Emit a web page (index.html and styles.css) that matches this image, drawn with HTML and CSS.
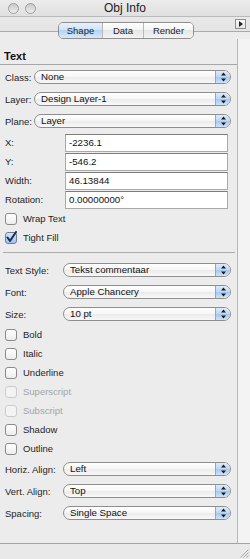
FILE: index.html
```html
<!DOCTYPE html>
<html lang="en">
    <head>
        <meta charset="UTF-8">
        <title>Obj Info</title>
        <link rel="stylesheet" href="styles.css">
    </head>
    <body>
        <div class="window">
            <div class="titlebar">
                <div class="lights">
                    <span class="light"></span>
                    <span class="light"></span>
                </div>
                <div class="title">Obj Info</div>
            </div>
            <div class="toolbar">
                <div class="segmented">
                    <div class="seg seg-shape active">Shape</div>
                    <div class="seg seg-data">Data</div>
                    <div class="seg seg-render">Render</div>
                </div>
                <div class="menu-btn">
                    <svg width="4" height="6" viewBox="0 0 4 6"><path d="M0 0 L4 3 L0 6 Z" fill="#222"/></svg>
                </div>
            </div>
            <div class="main">
                <div class="panel">
                    <div class="heading">Text</div>

                    <div class="group top-pops">
                        <div class="row pop-row">
                            <span class="lbl">Class:</span>
                            <div class="popup"><span class="val">None</span><span class="arrows"><svg width="7" height="10" viewBox="0 0 7 10"><path d="M3.5 0.5 L6 3.5 H1 Z M3.5 9.5 L6 6.5 H1 Z" fill="#1a1a1a"/></svg></span></div>
                        </div>
                        <div class="row pop-row">
                            <span class="lbl">Layer:</span>
                            <div class="popup"><span class="val">Design Layer-1</span><span class="arrows"><svg width="7" height="10" viewBox="0 0 7 10"><path d="M3.5 0.5 L6 3.5 H1 Z M3.5 9.5 L6 6.5 H1 Z" fill="#1a1a1a"/></svg></span></div>
                        </div>
                        <div class="row pop-row">
                            <span class="lbl">Plane:</span>
                            <div class="popup"><span class="val">Layer</span><span class="arrows"><svg width="7" height="10" viewBox="0 0 7 10"><path d="M3.5 0.5 L6 3.5 H1 Z M3.5 9.5 L6 6.5 H1 Z" fill="#1a1a1a"/></svg></span></div>
                        </div>
                    </div>

                    <div class="group fields">
                        <div class="row field-row"><span class="lbl">X:</span><div class="field">-2236.1</div></div>
                        <div class="row field-row"><span class="lbl">Y:</span><div class="field">-546.2</div></div>
                        <div class="row field-row"><span class="lbl">Width:</span><div class="field">46.13844</div></div>
                        <div class="row field-row"><span class="lbl">Rotation:</span><div class="field">0.00000000°</div></div>
                    </div>

                    <div class="group checks">
                        <div class="row check-row"><span class="box"></span>Wrap Text</div>
                        <div class="row check-row"><span class="box checked"><svg width="13" height="13" viewBox="0 0 13 13"><path d="M2.5 6.5 L5 10 L11 1" fill="none" stroke="#1c2c52" stroke-width="2" stroke-linecap="round" stroke-linejoin="round"/></svg></span>Tight Fill</div>
                    </div>

                    <div class="separator"></div>

                    <div class="group style-pops">
                        <div class="row pop-row">
                            <span class="lbl">Text Style:</span>
                            <div class="popup"><span class="val">Tekst commentaar</span><span class="arrows"><svg width="7" height="10" viewBox="0 0 7 10"><path d="M3.5 0.5 L6 3.5 H1 Z M3.5 9.5 L6 6.5 H1 Z" fill="#1a1a1a"/></svg></span></div>
                        </div>
                        <div class="row pop-row">
                            <span class="lbl">Font:</span>
                            <div class="popup"><span class="val">Apple Chancery</span><span class="arrows"><svg width="7" height="10" viewBox="0 0 7 10"><path d="M3.5 0.5 L6 3.5 H1 Z M3.5 9.5 L6 6.5 H1 Z" fill="#1a1a1a"/></svg></span></div>
                        </div>
                        <div class="row pop-row">
                            <span class="lbl">Size:</span>
                            <div class="popup"><span class="val">10 pt</span><span class="arrows"><svg width="7" height="10" viewBox="0 0 7 10"><path d="M3.5 0.5 L6 3.5 H1 Z M3.5 9.5 L6 6.5 H1 Z" fill="#1a1a1a"/></svg></span></div>
                        </div>
                    </div>

                    <div class="group checks">
                        <div class="row check-row"><span class="box"></span>Bold</div>
                        <div class="row check-row"><span class="box"></span>Italic</div>
                        <div class="row check-row"><span class="box"></span>Underline</div>
                        <div class="row check-row disabled"><span class="box"></span>Superscript</div>
                        <div class="row check-row disabled"><span class="box"></span>Subscript</div>
                        <div class="row check-row"><span class="box"></span>Shadow</div>
                        <div class="row check-row"><span class="box"></span>Outline</div>
                    </div>

                    <div class="group style-pops">
                        <div class="row pop-row">
                            <span class="lbl">Horiz. Align:</span>
                            <div class="popup"><span class="val">Left</span><span class="arrows"><svg width="7" height="10" viewBox="0 0 7 10"><path d="M3.5 0.5 L6 3.5 H1 Z M3.5 9.5 L6 6.5 H1 Z" fill="#1a1a1a"/></svg></span></div>
                        </div>
                        <div class="row pop-row">
                            <span class="lbl">Vert. Align:</span>
                            <div class="popup"><span class="val">Top</span><span class="arrows"><svg width="7" height="10" viewBox="0 0 7 10"><path d="M3.5 0.5 L6 3.5 H1 Z M3.5 9.5 L6 6.5 H1 Z" fill="#1a1a1a"/></svg></span></div>
                        </div>
                        <div class="row pop-row">
                            <span class="lbl">Spacing:</span>
                            <div class="popup"><span class="val">Single Space</span><span class="arrows"><svg width="7" height="10" viewBox="0 0 7 10"><path d="M3.5 0.5 L6 3.5 H1 Z M3.5 9.5 L6 6.5 H1 Z" fill="#1a1a1a"/></svg></span></div>
                        </div>
                    </div>
                </div>
                <div class="strip"></div>
            </div>
            <div class="footer">
                <svg width="10" height="10" viewBox="0 0 10 10">
                    <path d="M9.5 1.5 L1.5 9.5 M9.5 4.5 L4.5 9.5 M9.5 7.5 L7.5 9.5" stroke="#a8a8a8" stroke-width="1"/>
                </svg>
            </div>
        </div>
    </body>
</html>
```

FILE: styles.css
```css
*{
    margin: 0;
    padding: 0;
    box-sizing: border-box;
}
body{
    width: 250px;
    height: 559px;
    overflow: hidden;
    font-family: "Liberation Sans", Arial, sans-serif;
    font-size: 9.5px;
    color: #1e1e1e;
    background: #ececec;
}
.window{
    height: 559px;
    display: flex;
    flex-direction: column;
}

/* title bar */
.titlebar{
    height: 17px;
    display: grid;
    grid-template-columns: 1fr auto 1fr;
    align-items: center;
    background: linear-gradient(#ececec, #e0e0e0);
    border-bottom: 1px solid #b9b9b9;
}
.lights{
    display: flex;
    gap: 6px;
    padding-left: 8px;
}
.light{
    width: 11px;
    height: 11px;
    border-radius: 50%;
    border: 1px solid #9c9c9c;
    background: linear-gradient(#c9c9c9, #eeeeee);
}
.title{
    font-size: 12px;
    color: #222;
    line-height: 16px;
}

/* toolbar with tabs */
.toolbar{
    height: 22px;
    display: flex;
    align-items: flex-start;
    background: linear-gradient(to bottom, #e9e9e9 0, #e4e4e4 14px, #a9a9a9 14px, #a9a9a9 15px, #ececec 15px);
}
.segmented{
    display: flex;
    margin: 5px 0 0 58px;
    height: 17px;
    border: 1px solid #8f8f8f;
    border-radius: 5px;
    overflow: hidden;
}
.seg{
    line-height: 15px;
    text-align: center;
    background: linear-gradient(#ffffff, #f3f3f3 50%, #e6e6e6 50%, #f4f4f4);
    border-left: 1px solid #b8b8b8;
}
.seg:first-child{
    border-left: none;
}
.seg-shape{ width: 43px; }
.seg-data{ width: 41px; }
.seg-render{ width: 50px; }
.seg.active{
    background: linear-gradient(#e6f1fd, #cde2f9 50%, #b4d4f5 50%, #d6e9fb);
}
.menu-btn{
    margin: 2px 4px 0 auto;
    width: 11px;
    height: 10px;
    border: 1px solid #8c8c8c;
    background: linear-gradient(#fafafa, #e4e4e4);
    display: flex;
    align-items: center;
    justify-content: center;
}

/* main area */
.main{
    flex: 1;
    display: flex;
}
.panel{
    width: 238px;
    border-right: 1px solid #b6b6b6;
    background: #ececec;
}
.strip{
    flex: 1;
    background: #f3f3f3;
}
.heading{
    font-size: 11px;
    font-weight: bold;
    color: #111;
    line-height: 13px;
    padding: 11px 0 1px 4px;
    border-bottom: 1px solid #a6a6a6;
}
.row{
    display: flex;
    align-items: center;
}
.lbl{
    padding-left: 5px;
    flex-shrink: 0;
}

/* popups */
.top-pops{
    padding-top: 1px;
}
.pop-row{
    height: 22px;
    padding-right: 6px;
}
.top-pops .lbl{
    width: 34px;
}
.style-pops .lbl{
    width: 63px;
}
.popup{
    flex: 1;
    height: 14px;
    display: flex;
    border: 1px solid #8e8e8e;
    border-radius: 7px;
    overflow: hidden;
    background: linear-gradient(#ffffff, #f6f6f6 50%, #ebebeb 50%, #f8f8f8);
}
.val{
    flex: 1;
    padding-left: 6px;
    line-height: 12px;
    font-size: 9.7px;
    color: #111;
}
.arrows{
    width: 15px;
    border-left: 1px solid #9aa6b6;
    background: linear-gradient(#dcebfb, #bcd6f4 50%, #a3c6ef 50%, #cfe3f9);
    display: flex;
    align-items: center;
    justify-content: center;
}

/* text fields */
.fields{
    padding-top: 2px;
}
.field-row{
    height: 19px;
    align-items: flex-start;
}
.field-row:last-child{
    height: 18px;
}
.fields .lbl{
    width: 65px;
    line-height: 18px;
}
.field{
    width: 163px;
    height: 18px;
    padding-left: 3px;
    line-height: 16px;
    background: #fff;
    border: 1px solid #a9a9a9;
    border-top-color: #7c7c7c;
    font-size: 9.7px;
    color: #111;
}

/* checkboxes */
.check-row{
    height: 19px;
    padding-left: 5px;
}
.box{
    width: 12px;
    height: 12px;
    margin-right: 6px;
    border: 1px solid #8a8a8a;
    border-radius: 3px;
    background: linear-gradient(#ffffff, #ededed);
    position: relative;
}
.box.checked{
    background: linear-gradient(#d3e5fa, #9fc3ec);
    border-color: #6f7f98;
}
.box svg{
    position: absolute;
    left: -1px;
    top: -2px;
}
.disabled{
    color: #a4a4a4;
}
.disabled .box{
    border-color: #cbcbcb;
    background: #f3f3f3;
}

.separator{
    margin: 5px 2px 6px 3px;
    border-top: 1px solid #acacac;
}

/* footer */
.footer{
    height: 16px;
    border-top: 1px solid #a4a4a4;
    background: #e9e9e9;
    display: flex;
    justify-content: flex-end;
    align-items: flex-end;
    padding: 0 1px 1px 0;
}
```
